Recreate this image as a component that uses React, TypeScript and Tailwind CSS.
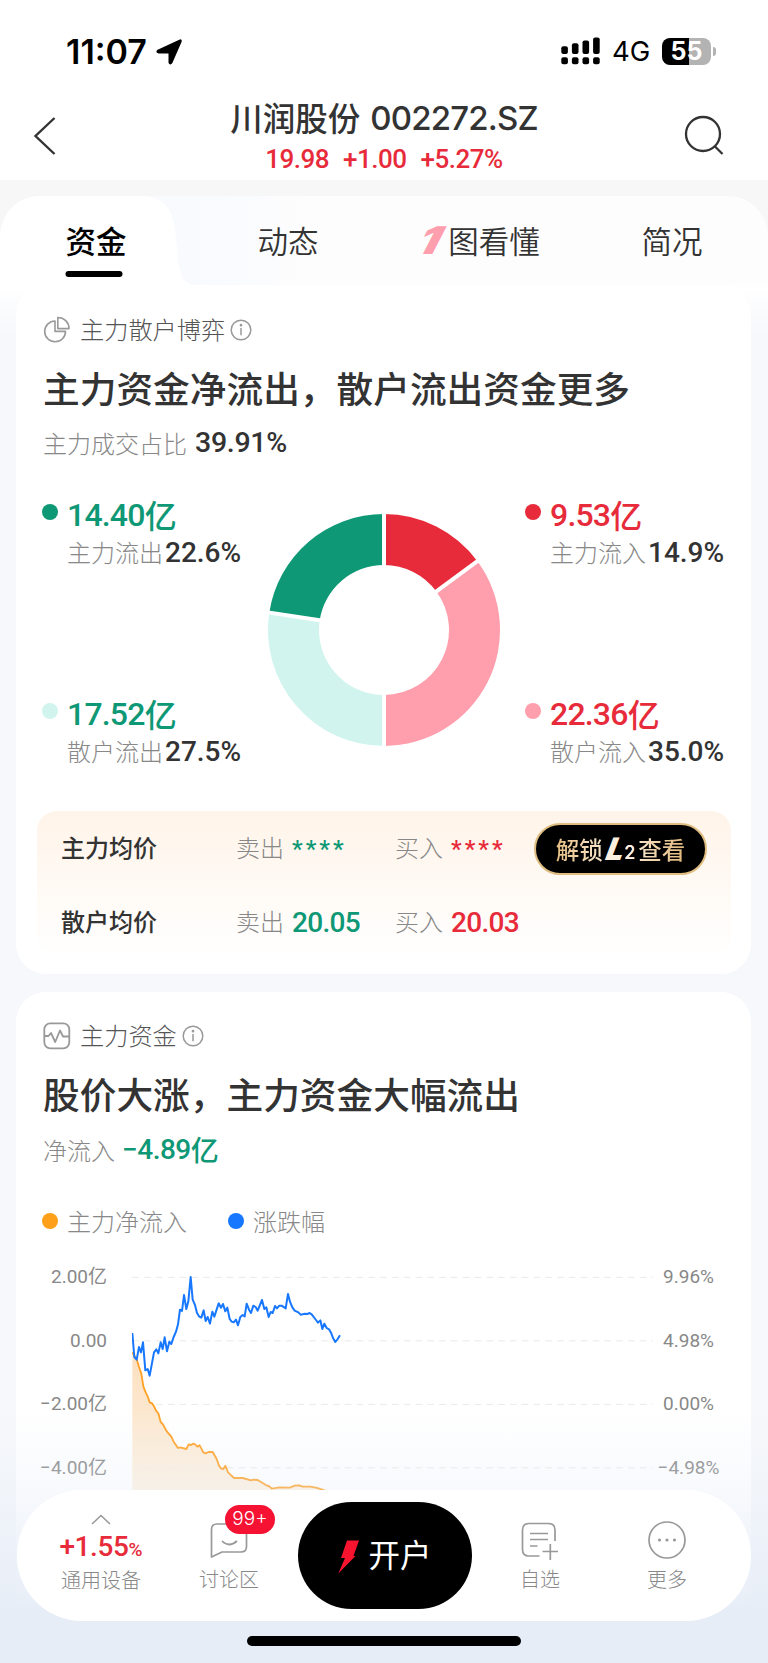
import type { ReactNode } from "react";

const BLUE_LINE =
  "97,250 103,322 110,330 117,292 123,308 129,278 136,362 143,358 149,378 162,308 169,299 175,311 182,278 188,298 194,263 201,305 208,276 214,283 221,262 228,246 234,224 240,180 246,184 252,136 259,178 265,155 272,82 278,150 285,166 291,190 298,201 304,204 311,182 317,214 323,202 330,222 337,186 343,201 356,161 363,174 369,163 376,185 382,174 389,208 395,216 401,218 408,210 414,227 421,202 428,196 434,200 440,162 447,180 453,190 460,168 467,172 473,183 486,151 493,178 499,173 506,202 512,187 518,190 525,169 531,176 538,168 545,168 557,176 564,133 570,156 577,173 584,183 595,188 602,195 615,192 622,193 629,190 635,194 648,211 654,219 661,212 667,238 673,222 680,235 687,239 693,249 699,265 706,277 713,268 720,257";

const ORANGE_LINE =
  "97,308 104,320 111,332 117,352 124,372 130,410 137,428 143,440 149,458 156,461 162,470 169,484 175,491 182,517 189,524 195,536 201,546 214,561 221,576 234,595 240,593 259,598 266,584 273,586 279,582 286,585 292,591 299,587 310,608 317,611 325,607 338,607 350,628 357,648 363,656 370,658 376,648 384,668 402,685 428,685 453,692 460,690 473,691 499,707 506,709 516,717 538,713 570,714 584,708 597,707 608,711 630,711 648,714 665,719 700,732";

const flows = {
  left: [
    { value: "14.40", label: "主力流出", pct: "22.6%", dot: "bg-[#0e9875]", color: "text-[#0e9875]" },
    { value: "17.52", label: "散户流出", pct: "27.5%", dot: "bg-[#d1f5ee]", color: "text-[#0e9875]" },
  ],
  right: [
    { value: "9.53", label: "主力流入", pct: "14.9%", dot: "bg-[#e72b3a]", color: "text-[#e72b3a]" },
    { value: "22.36", label: "散户流入", pct: "35.0%", dot: "bg-[#ff9eac]", color: "text-[#e72b3a]" },
  ],
};

type Flow = (typeof flows.left)[number];

function Num({ className = "", children }: { className?: string; children: ReactNode }) {
  return <span className={`font-[Roboto,'Noto_Sans_CJK_SC',sans-serif] font-medium ${className}`}>{children}</span>;
}

function InfoIcon() {
  return (
    <svg width="22" height="22" viewBox="0 0 22 22" fill="none" stroke="#999" strokeWidth="1.5">
      <circle cx="11" cy="11" r="9.8" />
      <path d="M11 9v7.2" />
      <circle cx="11" cy="6.2" r="0.6" fill="#999" />
    </svg>
  );
}

function StatusBar() {
  return (
    <div className="flex h-[102px] items-center justify-between pr-[52px] pl-[66px]">
      <div className="flex items-center gap-[9px] pt-px">
        <span className="font-[Inter] text-[34px] leading-none font-semibold text-black">11:07</span>
        <svg width="26" height="26" viewBox="0 0 26 26">
          <path
            d="M23.6 1.4Q25.4.6 24.8 2.6L15.6 23.8Q14.2 25.6 13.3 23.6V13.6H2.4Q.2 12.8 2 11.4Z"
            stroke="#000"
            strokeWidth="1.6"
            strokeLinejoin="round"
          />
        </svg>
      </div>
      <div className="flex items-center">
        <svg width="39" height="28" viewBox="0 0 39 28">
          {[0, 1, 2, 3].map((i) => (
            <g key={i}>
              <rect x={0.3 + i * 10.6} y={9.2 - i * 2.9} width="6.6" height={7.8 + i * 2.9} rx="2" />
              <rect x={0.3 + i * 10.6} y="20.2" width="6.6" height="7" rx="2" />
            </g>
          ))}
        </svg>
        <span className="mt-px ml-3 font-[Inter] text-[27.5px] leading-none tracking-[-0.2px] text-black">4G</span>
        <div className="ml-[12px] flex h-[27px] w-[49px] items-center justify-center rounded-lg bg-linear-to-r from-black from-55% to-[#b3b3b3] to-55%">
          <span className="font-[Inter] text-[25px] leading-none font-bold text-white">55</span>
        </div>
        <span className="ml-[2px] h-[9px] w-[3px] rounded-r-full bg-[#b3b3b3]" />
      </div>
    </div>
  );
}

function Header() {
  return (
    <header className="flex h-[78px] items-start justify-between pr-[42px] pl-[33px] text-[#333]">
      <svg width="24" height="40" viewBox="0 0 24 40" className="mt-[14px]" fill="none" stroke="#333" strokeWidth="2.4">
        <path d="M21.5 2 2.5 20 21.5 38" />
      </svg>
      <div className="flex flex-col items-center pl-[27px]">
        <div className="-mt-[2px] flex h-[36px] items-center whitespace-pre">
          <span className="-mt-[2px] text-[32.5px] font-medium">川润股份</span>
          <span className="mt-px ml-[10px] font-[Inter] text-[33px] font-medium tracking-[-0.8px]">002272.SZ</span>
        </div>
        <div className="mt-[7px] flex h-[32px] items-center gap-[14px] text-[26px] text-[#e72b3a]">
          <Num className="tracking-[-0.5px]">19.98</Num>
          <Num className="tracking-[-0.5px]">+1.00</Num>
          <Num className="tracking-[-0.5px]">+5.27%</Num>
        </div>
      </div>
      <svg width="42" height="42" viewBox="0 0 42 42" className="mt-[13px]" fill="none" stroke="#333" strokeWidth="2.3">
        <circle cx="19" cy="19" r="17" />
        <path d="m30.5 31 8 8" />
      </svg>
    </header>
  );
}

function Tabs() {
  return (
    <div className="bg-[#f7f7f7] pt-4">
      <nav className="relative flex h-[89px] rounded-t-[40px] bg-linear-to-r from-[#f8fafe] from-25% to-[#fdfdfd] to-40% text-[30.5px] text-[#333]">
        <svg width="196" height="89" viewBox="0 0 196 89" className="absolute top-0 left-0">
          <path d="M0 89V40C2 16 18 0 40 0H142C164 0 173 14 175 34L178 62C180 79 184 89 196 89Z" fill="#fff" />
        </svg>
        <div className="relative flex w-48 flex-col items-center pt-[21px] font-medium text-black">
          <span className="leading-[46px]">资金</span>
          <span className="mt-[8px] h-[6px] w-[57px] -translate-x-[2.5px] rounded-full bg-black" />
        </div>
        <span className="flex w-48 justify-center pt-[21px] leading-[46px] font-[350]">动态</span>
        <span className="flex w-48 justify-center pt-[21px] leading-[46px] font-[350]">
          <span className="mr-[2px] w-[26px] -translate-x-[6px] scale-x-125 -skew-x-[14deg] text-center font-[Inter] text-[38px] font-black text-[#ff9eac] italic">
            1
          </span>
          图看懂
        </span>
        <span className="flex w-48 justify-center pt-[21px] leading-[46px] font-[350]">简况</span>
      </nav>
    </div>
  );
}

function CardHeading({ icon, label, title }: { icon: ReactNode; label: string; title: string }) {
  return (
    <div className="px-[27px]">
      <div className="flex h-7 items-center text-[24.2px] font-light text-[#555]">
        <span className="w-[37px]">{icon}</span>
        <span className="-translate-y-px">{label}</span>
        <span className="ml-[5px]">
          <InfoIcon />
        </span>
      </div>
      <h2 className="mt-[17px] text-[36.7px] leading-[52px] font-medium whitespace-nowrap text-[#333]">{title}</h2>
    </div>
  );
}

function FlowItem({ value, label, pct, dot, color }: Flow) {
  return (
    <div className="flex h-[76px]">
      <span className={`mt-[8px] mr-[9px] h-4 w-4 rounded-full ${dot}`} />
      <div className="whitespace-nowrap">
        <div className={`flex h-[38px] items-center text-[32px] ${color}`}>
          <Num className="tracking-[-0.8px]">{value}</Num>
          <span className="-translate-y-px font-medium">亿</span>
        </div>
        <div className="flex h-[38px] items-center text-[24px] text-[#888]">
          <span className="-translate-y-px font-light">{label}</span>
          <Num className="ml-[2px] text-[28px] text-[#333]">{pct}</Num>
        </div>
      </div>
    </div>
  );
}

function Donut() {
  const slices = [
    { from: 0, to: 14.9, color: "#e72b3a" },
    { from: 14.9, to: 50, color: "#ff9eac" },
    { from: 50, to: 77.4, color: "#d1f5ee" },
    { from: 77.4, to: 100, color: "#0e9875" },
  ];
  const at = (pct: number, r: number) => {
    const a = (pct / 100) * Math.PI * 2;
    return `${120 + Math.sin(a) * r} ${120 - Math.cos(a) * r}`;
  };
  return (
    <svg width="240" height="240" viewBox="0 0 240 240">
      {slices.map((s) => (
        <path key={s.color} fill={s.color} d={`M${at(s.from, 116)}A116 116 0 0 1 ${at(s.to, 116)}L${at(s.to, 65)}A65 65 0 0 0 ${at(s.from, 65)}Z`} />
      ))}
      {slices.map((s) => (
        <path key={s.from} stroke="#fff" strokeWidth="4" d={`M${at(s.from, 60)}L${at(s.from, 119)}`} />
      ))}
    </svg>
  );
}

function PriceRow({ name, sell, buy, children }: { name: string; sell: ReactNode; buy: ReactNode; children?: ReactNode }) {
  return (
    <div className="flex h-[74px] items-center text-[24px] text-[#888]">
      <span className="w-[175px] -translate-y-[2px] font-medium text-[#333]">{name}</span>
      <span className="w-[56px] -translate-y-[2px] font-light">卖出</span>
      <span className="w-[103px] text-[#0e9875]">{sell}</span>
      <span className="w-[56px] -translate-y-[2px] font-light">买入</span>
      <span className="w-[83px] text-[#e72b3a]">{buy}</span>
      {children}
    </div>
  );
}

function GameCard() {
  return (
    <section className="h-[689px] rounded-[30px] bg-white pt-[31px]">
      <CardHeading
        label="主力散户博弈"
        title="主力资金净流出，散户流出资金更多"
        icon={
          <svg width="28" height="28" viewBox="0 0 28 28" fill="none" stroke="#999" strokeWidth="1.6" strokeLinejoin="round">
            <path d="M12 5A10.4 10.4 0 1 0 22.5 15.4H12Z" />
            <path d="M14.8 1.5V12.6H26A11 11 0 0 0 14.8 1.5Z" />
          </svg>
        }
      />
      <div className="mt-[2px] flex h-[38px] items-center gap-[8px] px-[27px] pt-[18px] text-[24px] text-[#888]">
        <span className="font-light">主力成交占比</span>
        <Num className="text-[28.5px] tracking-[-0.3px] text-[#333]">39.91%</Num>
      </div>
      <div className="mt-[43px] flex h-[275px] justify-between pr-[23px] pl-[26px]">
        <div className="flex w-[221px] flex-col justify-between">
          {flows.left.map((f) => (
            <FlowItem key={f.label} {...f} />
          ))}
        </div>
        <div className="-ml-[21px] pt-[14px]">
          <Donut />
        </div>
        <div className="flex w-[203px] flex-col justify-between">
          {flows.right.map((f) => (
            <FlowItem key={f.label} {...f} />
          ))}
        </div>
      </div>
      <div className="mr-5 ml-[21px] mt-[40px] h-[146px] rounded-[20px] bg-linear-to-b from-[#fff4e9] to-white pt-px pl-[24px]">
        <PriceRow
          name="主力均价"
          sell={<Num className="inline-block -translate-y-px text-[24px] tracking-[3px]">****</Num>}
          buy={<Num className="inline-block -translate-y-px text-[24px] tracking-[3px]">****</Num>}
        >
          <button className="flex h-[52px] w-[173px] items-center justify-center rounded-full border-2 border-[#e0bd80] bg-black">
            <span className="flex items-center bg-linear-to-r from-[#e7bf85] via-[#fff5e6] to-[#e0b77a] bg-clip-text text-[23.5px] leading-[40px] font-medium text-transparent">
              <span className="-mt-px">解锁</span>
              <span className="ml-[4px] -skew-x-12 font-[Inter] text-[31px] font-black text-[#fdf0e0] italic">L</span>
              <span className="mt-[7px] mr-[3px] font-[Inter] text-[18px] text-[#fdf0e0]">2</span>
              <span className="-mt-px">查看</span>
            </span>
          </button>
        </PriceRow>
        <PriceRow
          name="散户均价"
          sell={<Num className="text-[28px] tracking-[-0.7px]">20.05</Num>}
          buy={<Num className="text-[28px] tracking-[-0.7px]">20.03</Num>}
        />
      </div>
    </section>
  );
}

function Chart() {
  return (
    <div className="mt-[20px] flex h-[260px] pl-[22px] text-[19px] text-[#888]">
      <div className="flex w-[69px] flex-col items-end">
        {["2.00亿", "0.00", "−2.00亿", "−4.00亿"].map((t) => (
          <Num key={t} className="h-[63.5px] shrink-0 leading-[34px] font-normal whitespace-nowrap">
            {t}
          </Num>
        ))}
      </div>
      <svg width="521" height="240" viewBox="96 31 1563 720" className="ml-[25px]">
        <defs>
          <linearGradient id="area" x1="0" y1="0" x2="0" y2="1">
            <stop offset="0" stopColor="#fbdcb8" stopOpacity="0.9" />
            <stop offset="1" stopColor="#fdf1e0" stopOpacity="0.85" />
          </linearGradient>
        </defs>
        {[83, 273.5, 464, 654.5].map((y) => (
          <path key={y} d={`M97 ${y}H1659`} stroke="#e9e9e9" strokeWidth="3" strokeDasharray="20 15.4" />
        ))}
        <polygon points={`97,750 ${ORANGE_LINE} 700,750`} fill="url(#area)" />
        <polyline points={ORANGE_LINE} fill="none" stroke="#ffa126" strokeWidth="5.5" strokeLinejoin="round" />
        <polyline points={BLUE_LINE} fill="none" stroke="#1777ff" strokeWidth="6" strokeLinejoin="round" />
      </svg>
      <div className="flex w-[71px] flex-col items-center">
        {["9.96%", "4.98%", "0.00%", "−4.98%"].map((t) => (
          <Num key={t} className="h-[63.5px] shrink-0 leading-[34px] font-normal">
            {t}
          </Num>
        ))}
      </div>
    </div>
  );
}

function FundsCard() {
  return (
    <section className="h-[671px] rounded-t-[30px] bg-white pt-[30px]">
      <CardHeading
        label="主力资金"
        title="股价大涨，主力资金大幅流出"
        icon={
          <svg width="28" height="28" viewBox="0 0 28 28" fill="none" stroke="#999" strokeWidth="1.8" strokeLinejoin="round">
            <rect x="1.3" y="1.3" width="25" height="25" rx="6" />
            <path d="M2 14h3.5L8 11l4.2 9L17 8.5l3 6h6.5" />
          </svg>
        }
      />
      <div className="mt-[3px] flex h-[38px] items-center gap-[7px] px-[27px] pt-[18px] text-[24px] text-[#888]">
        <span className="font-light">净流入</span>
        <span className="flex items-center text-[28px] text-[#0e9875]">
          <Num className="tracking-[-0.5px]">−4.89</Num>
          <span className="-translate-y-px font-medium">亿</span>
        </span>
      </div>
      <div className="mt-[42px] flex h-[38px] items-center px-[26px] text-[24px] font-light text-[#888]">
        <span className="mr-[9px] h-4 w-4 rounded-full bg-[#ffa01a]" />
        主力净流入
        <span className="mr-[9px] ml-[41px] h-4 w-4 rounded-full bg-[#1777ff]" />
        涨跌幅
      </div>
      <Chart />
    </section>
  );
}

function BottomNav() {
  return (
    <div className="absolute inset-x-0 bottom-0 flex h-[253px] flex-col items-center bg-linear-to-b from-[#e6edf7]/0 via-[#e6edf7]/30 via-32% to-[#e7edf7] to-80% pt-[80px]">
      <nav className="relative flex h-[131px] w-[734px] items-center rounded-[65px] bg-white text-[20px] font-light text-[#888]">
        <div className="flex w-[168px] flex-col items-center pb-[3px]">
          <svg width="20" height="11" viewBox="0 0 20 11" fill="none" stroke="#999" strokeWidth="1.6">
            <path d="m1 10 9-8.5L19 10" />
          </svg>
          <span className="mt-[4px] flex h-[36px] items-baseline text-[28px] leading-[36px] text-[#e72b3a]">
            <Num className="tracking-[-0.4px]">+1.55</Num>
            <Num className="text-[19px]">%</Num>
          </span>
          <span className="leading-[30px]">通用设备</span>
        </div>
        <div className="relative flex w-[88px] flex-col items-center pt-[5px]">
          <svg width="38" height="38" viewBox="0 0 38 38" fill="none" stroke="#999" strokeWidth="1.7" strokeLinejoin="round">
            <path d="M7 2H31Q36.5 2 36.5 7.5V24.5Q36.5 30 31 30H12L1.5 35V7.5Q1.5 2 7 2Z" />
            <path d="M12 19Q19 26 27 19" />
          </svg>
          <span className="mt-[4px] leading-[30px]">讨论区</span>
          <span className="absolute top-[-12px] left-[40px] flex h-[29px] w-[50px] items-center justify-center rounded-full bg-[#f51233] font-[Inter] text-[19px] text-white">
            99+
          </span>
        </div>
        <button className="ml-[25px] flex h-[107px] w-[174px] items-center justify-center rounded-[54px] bg-black text-[31.5px] font-normal text-white">
          <svg width="21" height="34" viewBox="0 0 21 34" className="mt-[2px] mr-[9px]">
            <path d="M9 0.5H21L15.5 16H17.5L0.3 33.5 7 18H3Z" fill="#f8142f" />
          </svg>
          <span className="-mt-[3px]">开户</span>
        </button>
        <div className="ml-[19px] flex w-[98px] flex-col items-center pt-[5px]">
          <svg width="38" height="38" viewBox="0 0 38 38" fill="none" stroke="#999" strokeWidth="1.7">
            <path d="M18.5 34H8Q1.5 34 1.5 27.5V8Q1.5 1.5 8 1.5H27.5Q34 1.5 34 8V19" />
            <path d="M9 11.5H27M9 17.5H27M9 24H16.5M21.5 29.5H37M29.3 22V38" />
          </svg>
          <span className="mt-[4px] leading-[30px]">自选</span>
        </div>
        <div className="ml-[29px] flex w-[98px] flex-col items-center pt-[4px]">
          <svg width="38" height="38" viewBox="0 0 38 38" fill="none" stroke="#999" strokeWidth="1.7">
            <circle cx="19" cy="19" r="18" />
            <g fill="#999" stroke="none">
              <circle cx="11.5" cy="19" r="1.6" />
              <circle cx="19" cy="19" r="1.6" />
              <circle cx="26.5" cy="19" r="1.6" />
            </g>
          </svg>
          <span className="mt-[5px] leading-[30px]">更多</span>
        </div>
      </nav>
      <span className="mt-[15px] h-[10px] w-[274px] rounded-full bg-black" />
    </div>
  );
}

export default function App() {
  return (
    <div className="relative h-[1663px] w-[768px] overflow-hidden bg-white font-['Noto_Sans_CJK_SC',sans-serif]">
      <StatusBar />
      <Header />
      <Tabs />
      <main className="flex flex-col gap-[18px] bg-linear-to-b from-white to-[#f6f8fb] to-[50px] pr-[17px] pl-4">
        <GameCard />
        <FundsCard />
      </main>
      <BottomNav />
    </div>
  );
}
